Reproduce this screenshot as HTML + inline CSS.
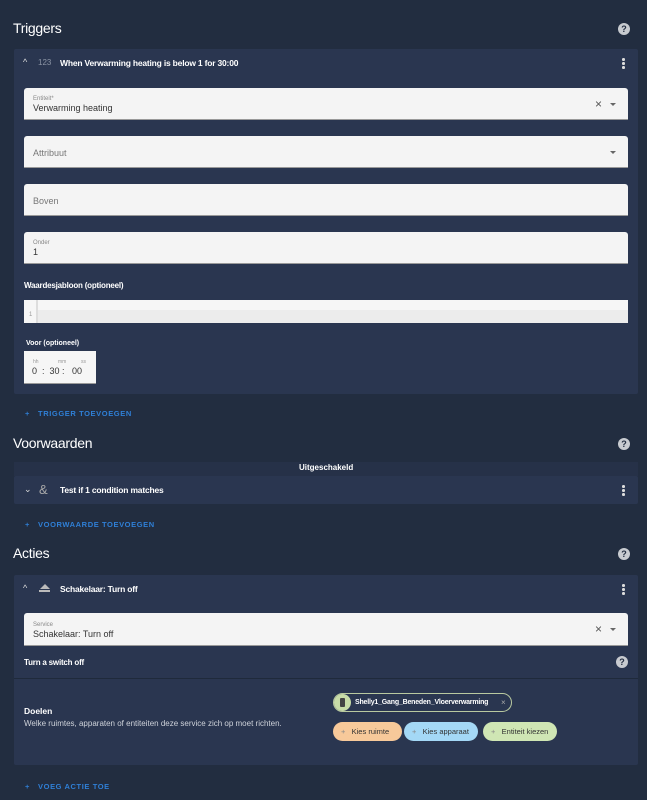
<!DOCTYPE html><html><head><style>
*{box-sizing:border-box;margin:0;padding:0}
body{width:647px;height:800px;background:#222d40;font-family:"Liberation Sans",sans-serif;color:#e8eaee;position:relative;overflow:hidden;font-size:9px}
.a{position:absolute}
.h{font-size:14px;color:#fff;letter-spacing:-0.3px}
.help{width:12px;height:12px;border-radius:50%;background:#c8cbd0;color:#222d40;font-size:9px;font-weight:bold;text-align:center;line-height:12px}
.card{background:#2a3650;border-radius:2px}
.field{background:#f4f4f4;border-bottom:1px solid #999;border-radius:3px 3px 0 0;color:#333}
.lbl{font-size:6px;color:#888}
.val{font-size:9px;color:#333}
.ph{font-size:9px;color:#777}
.add{color:#2f7fd6;font-size:7.5px;font-weight:bold;letter-spacing:0.6px}
.dots{width:3px}
.dots i{display:block;width:2.5px;height:2.5px;background:#ddd;border-radius:50%;margin-bottom:1.5px}
.arr{width:0;height:0;border-left:3px solid transparent;border-right:3px solid transparent;border-top:3px solid #666}
.btn{height:19px;border-radius:10px;font-size:7.5px;color:#333;line-height:19px;padding-left:8px}
</style></head><body>
<div class="a h" style="left:13px;top:20px">Triggers</div>
<div class="a help" style="left:618px;top:23px">?</div>
<div class="a card" style="left:14px;top:49px;width:624px;height:345px"></div>
<div class="a" style="left:23px;top:57px;font-size:9px;color:#ddd">^</div>
<div class="a" style="left:38px;top:58px;font-size:8px;color:#8c95a5">123</div>
<div class="a" style="left:60px;top:58px;font-size:8.5px;font-weight:bold;color:#fff;letter-spacing:-0.2px">When Verwarming heating is below 1 for 30:00</div>
<div class="a dots" style="left:622px;top:58px"><i></i><i></i><i></i></div>
<div class="a field" style="left:24px;top:88px;width:604px;height:32px"><div class="a lbl" style="left:9px;top:8px">Entiteit*</div><div class="a val" style="left:9px;top:15px">Verwarming heating</div><div class="a" style="left:571px;top:9px;font-size:12px;color:#555">×</div><div class="a arr" style="left:586px;top:15px"></div></div>
<div class="a field" style="left:24px;top:136px;width:604px;height:32px"><div class="a ph" style="left:9px;top:12px">Attribuut</div><div class="a arr" style="left:586px;top:15px"></div></div>
<div class="a field" style="left:24px;top:184px;width:604px;height:32px"><div class="a ph" style="left:9px;top:12px">Boven</div></div>
<div class="a field" style="left:24px;top:232px;width:604px;height:32px"><div class="a lbl" style="left:9px;top:8px">Onder</div><div class="a val" style="left:9px;top:15px">1</div></div>
<div class="a" style="left:24px;top:281px;font-size:8px;font-weight:bold;color:#fff;letter-spacing:-0.2px">Waardesjabloon (optioneel)</div>
<div class="a" style="left:24px;top:300px;width:604px;height:23px;background:#f6f6f6"><div class="a" style="left:12px;top:0;width:2px;height:23px;background:#ddd"></div><div class="a" style="left:14px;top:10px;width:590px;height:13px;background:#ececec"></div><div class="a" style="left:5px;top:12px;font-size:6px;color:#999">1</div></div>
<div class="a" style="left:26px;top:340px;font-size:7px;font-weight:bold;color:#fff">Voor (optioneel)</div>
<div class="a" style="left:24px;top:351px;width:72px;height:33px;background:#f6f6f6;border-bottom:1px solid #999"><div class="a" style="left:9px;top:8px;font-size:5px;color:#999">hh</div><div class="a" style="left:34px;top:8px;font-size:5px;color:#999">mm</div><div class="a" style="left:57px;top:8px;font-size:5px;color:#999">ss</div><div class="a val" style="left:8px;top:15px">0&nbsp;&nbsp;:&nbsp;&nbsp;30&nbsp;:&nbsp;&nbsp;&nbsp;00</div></div>
<div class="a add" style="left:25px;top:409px">+&nbsp;&nbsp;&nbsp;TRIGGER TOEVOEGEN</div>
<div class="a h" style="left:13px;top:435px">Voorwaarden</div>
<div class="a help" style="left:618px;top:438px">?</div>
<div class="a" style="left:14px;top:462px;width:624px;height:14px;background:#263148"></div>
<div class="a" style="left:299px;top:463px;font-size:8px;font-weight:bold;color:#fff">Uitgeschakeld</div>
<div class="a card" style="left:14px;top:476px;width:624px;height:28px"></div>
<div class="a" style="left:24px;top:484px;font-size:9px;color:#ddd">⌄</div>
<div class="a" style="left:39px;top:482px;font-size:13px;color:#aaa">&amp;</div>
<div class="a" style="left:60px;top:485px;font-size:8.5px;font-weight:bold;color:#fff;letter-spacing:-0.2px">Test if 1 condition matches</div>
<div class="a dots" style="left:622px;top:485px"><i></i><i></i><i></i></div>
<div class="a add" style="left:25px;top:520px">+&nbsp;&nbsp;&nbsp;VOORWAARDE TOEVOEGEN</div>
<div class="a h" style="left:13px;top:545px">Acties</div>
<div class="a help" style="left:618px;top:548px">?</div>
<div class="a card" style="left:14px;top:575px;width:624px;height:190px"></div>
<div class="a" style="left:23px;top:583px;font-size:9px;color:#ddd">^</div>
<div class="a" style="left:39px;top:584px;width:11px;height:8px;border-bottom:2px solid #bbb"><div style="width:0;height:0;border-left:5px solid transparent;border-right:5px solid transparent;border-bottom:5px solid #bbb;margin:0 auto"></div></div>
<div class="a" style="left:60px;top:584px;font-size:8.5px;font-weight:bold;color:#fff;letter-spacing:-0.2px">Schakelaar: Turn off</div>
<div class="a dots" style="left:622px;top:584px"><i></i><i></i><i></i></div>
<div class="a field" style="left:24px;top:613px;width:604px;height:33px"><div class="a lbl" style="left:9px;top:9px">Service</div><div class="a val" style="left:9px;top:16px">Schakelaar: Turn off</div><div class="a" style="left:571px;top:9px;font-size:12px;color:#555">×</div><div class="a arr" style="left:586px;top:15px"></div></div>
<div class="a" style="left:24px;top:658px;font-size:8px;font-weight:bold;color:#fff;letter-spacing:-0.2px">Turn a switch off</div>
<div class="a help" style="left:616px;top:656px">?</div>
<div class="a" style="left:14px;top:678px;width:624px;height:1px;background:#1f2a3b"></div>
<div class="a" style="left:24px;top:706px;font-size:8.5px;font-weight:bold;color:#fff">Doelen</div>
<div class="a" style="left:24px;top:719px;font-size:8px;color:#cfd3da">Welke ruimtes, apparaten of entiteiten deze service zich op moet richten.</div>
<div class="a" style="left:333px;top:693px;width:179px;height:19px;border:1px solid #b9c9a0;border-radius:10px;background:#2a3650"><div class="a" style="left:0;top:0;width:17px;height:17px;border-radius:50%;background:#c8dca8"><div style="width:5px;height:9px;background:#444;margin:4px auto;border-radius:1px"></div></div><div class="a" style="left:21px;top:5px;font-size:7px;font-weight:bold;color:#fff;letter-spacing:-0.2px">Shelly1_Gang_Beneden_Vloerverwarming</div><div class="a" style="left:167px;top:4px;font-size:8px;color:#aaa">×</div></div>
<div class="a btn" style="left:333px;top:722px;width:69px;background:#f7c99a"><span style="color:#888">+</span>&nbsp;&nbsp;&nbsp;Kies ruimte</div>
<div class="a btn" style="left:404px;top:722px;width:74px;background:#a4d8f6"><span style="color:#888">+</span>&nbsp;&nbsp;&nbsp;Kies apparaat</div>
<div class="a btn" style="left:483px;top:722px;width:74px;background:#cfe6b4"><span style="color:#888">+</span>&nbsp;&nbsp;&nbsp;Entiteit kiezen</div>
<div class="a add" style="left:25px;top:782px">+&nbsp;&nbsp;&nbsp;VOEG ACTIE TOE</div>
</body></html>
